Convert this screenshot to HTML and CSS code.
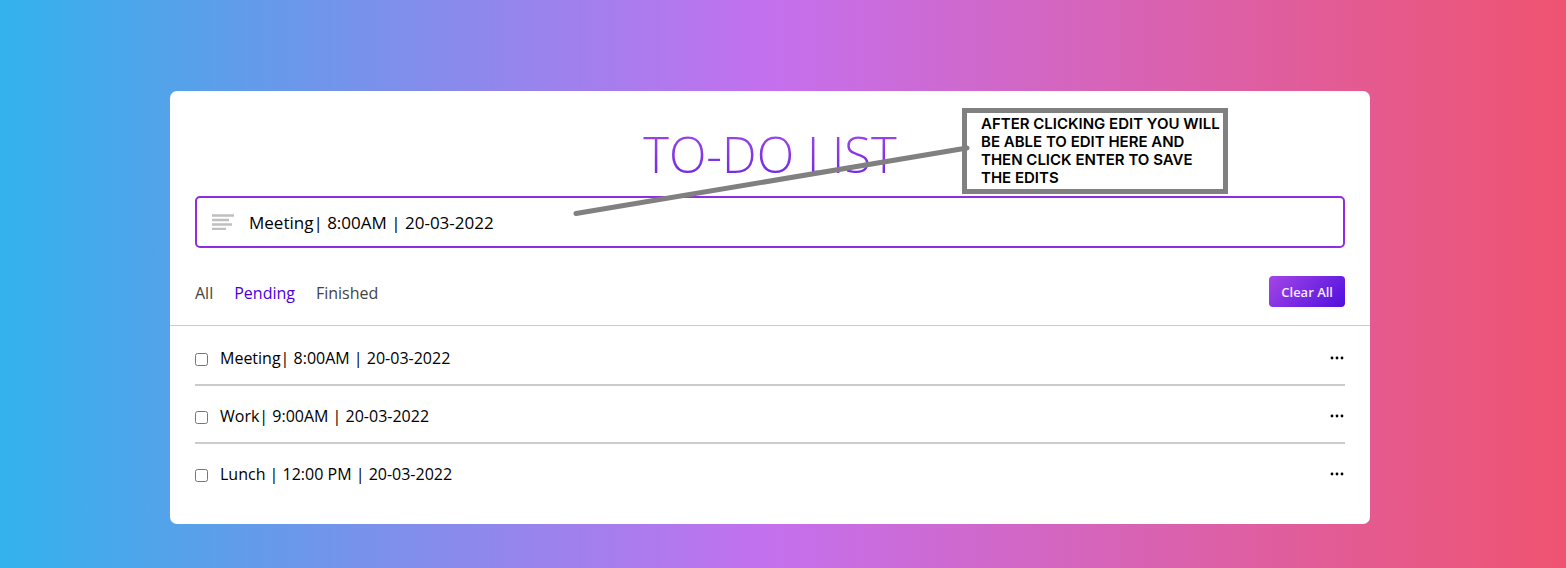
FILE: index.html
```html
<!DOCTYPE html>
<html lang="en">
<head>
<meta charset="utf-8">
<meta name="viewport" content="width=device-width, initial-scale=1">
<title>To-Do List</title>
<link rel="stylesheet" href="styles.css">
</head>
<body>
<main class="wrapper">
  <h1 class="title">TO-DO LIST</h1>
  <div class="task-input">
    <svg class="task-input-icon" viewBox="0 0 22 16" aria-hidden="true">
      <path d="M0 1.500h22M0 6h17M0 10.500h20M0 15h14" fill="none" stroke="#c0c0c0" stroke-width="2.300"/>
    </svg>
    <input class="task-field" type="text" aria-label="Task" value="Meeting| 8:00AM | 20-03-2022">
  </div>
  <div class="controls">
    <nav class="filters">
      <a class="filter" href="#all">All</a>
      <a class="filter active" href="#pending">Pending</a>
      <a class="filter" href="#finished">Finished</a>
    </nav>
    <button class="clear-btn" type="button">Clear All</button>
  </div>
  <ul class="task-box">
    <li class="task">
      <label class="task-label"><input class="task-check" type="checkbox"><span>Meeting| 8:00AM | 20-03-2022</span></label>
      <button class="task-menu" type="button" aria-label="Task options"><svg class="dots" viewBox="0 0 14 4"><circle cx="2" cy="2" r="1.400"/><circle cx="7" cy="2" r="1.400"/><circle cx="12" cy="2" r="1.400"/></svg></button>
    </li>
    <li class="task">
      <label class="task-label"><input class="task-check" type="checkbox"><span>Work| 9:00AM | 20-03-2022</span></label>
      <button class="task-menu" type="button" aria-label="Task options"><svg class="dots" viewBox="0 0 14 4"><circle cx="2" cy="2" r="1.400"/><circle cx="7" cy="2" r="1.400"/><circle cx="12" cy="2" r="1.400"/></svg></button>
    </li>
    <li class="task">
      <label class="task-label"><input class="task-check" type="checkbox"><span>Lunch | 12:00 PM | 20-03-2022</span></label>
      <button class="task-menu" type="button" aria-label="Task options"><svg class="dots" viewBox="0 0 14 4"><circle cx="2" cy="2" r="1.400"/><circle cx="7" cy="2" r="1.400"/><circle cx="12" cy="2" r="1.400"/></svg></button>
    </li>
  </ul>
  <aside class="note">AFTER CLICKING EDIT YOU WILL<br>BE ABLE TO EDIT HERE AND<br>THEN CLICK ENTER TO SAVE<br>THE EDITS</aside>
  <svg class="pointer" viewBox="0 0 400 72" aria-hidden="true">
    <path d="M4 68.500L395 3" fill="none" stroke="#808080" stroke-width="5" stroke-linecap="round"/>
  </svg>
</main>
</body>
</html>
```
FILE: styles.css
```css
* {
  box-sizing: border-box;
}

body {
  margin: 0;
  min-height: 100vh;
  padding: 91px 26px 44px 0;
  background: linear-gradient(to right, #33b3ee 0%, #54a2ea 11%, #c470ee 49%, #ef5370 100%);
  font-family: "Open Sans", "Noto Sans", sans-serif;
  font-weight: 400;
  color: #000;
}

.wrapper {
  position: relative;
  max-width: 1200px;
  margin: 0 auto;
  padding: 27px 0 22px;
  background: #fff;
  border-radius: 7px;
}

.title {
  margin: 0 25px;
  font-size: 49px;
  font-weight: 300;
  line-height: 72px;
  text-align: center;
  color: transparent;
  background: linear-gradient(to bottom, #a84fe8, #6420e4);
  background-clip: text;
  -webkit-background-clip: text;
}

.task-input {
  display: flex;
  align-items: center;
  gap: 15px;
  height: 52px;
  margin: 6px 25px 0;
  padding: 0 15px;
  border: 2px solid #8e2de2;
  border-radius: 5px;
}

.task-input-icon {
  flex: none;
  width: 22px;
  height: 16px;
}

.task-field {
  flex: 1;
  min-width: 0;
  height: 100%;
  padding: 0;
  border: 0;
  outline: 0;
  background: none;
  color: inherit;
  font: inherit;
  font-size: 17px;
}

.controls {
  display: flex;
  align-items: center;
  justify-content: space-between;
  padding: 28px 25px 18px;
  border-bottom: 1px solid #ccc;
}

.filters {
  display: flex;
  gap: 21px;
  padding-top: 2px;
}

.filter {
  font-size: 16px;
  line-height: 24px;
  color: #444;
  text-decoration: none;
}

.filter.active {
  color: #4a00e0;
}

.clear-btn {
  height: 31px;
  padding: 0 12px;
  border: 0;
  border-radius: 4px;
  background: linear-gradient(135deg, #a445e6, #4f10de);
  color: #f4ecff;
  font: inherit;
  font-size: 13px;
  font-weight: 600;
}

.task-box {
  margin: 0 25px;
  padding: 2px 0 0;
  list-style: none;
}

.task {
  display: flex;
  align-items: center;
  justify-content: space-between;
  height: 58px;
  padding-top: 4px;
  border-bottom: 2px solid #ccc;
}

.task:last-child {
  border-bottom-color: transparent;
}

.task-label {
  display: flex;
  align-items: center;
  gap: 12px;
  font-size: 16px;
  line-height: 24px;
}

.task-check {
  flex: none;
  width: 13px;
  height: 13px;
  margin: 3px 0 0;
}

.task-menu {
  display: flex;
  padding: 8px 1px;
  border: 0;
  background: none;
}

.dots {
  width: 14px;
  height: 4px;
}

.note {
  position: absolute;
  top: 17px;
  left: 792px;
  width: 266px;
  padding: 2px 0 2px 14px;
  border: 5px solid #808080;
  background: #fff;
  font-family: Inter, sans-serif;
  font-size: 15px;
  font-weight: 600;
  line-height: 18px;
  white-space: nowrap;
}

.pointer {
  position: absolute;
  top: 54px;
  left: 402px;
  width: 400px;
  height: 72px;
}
```
